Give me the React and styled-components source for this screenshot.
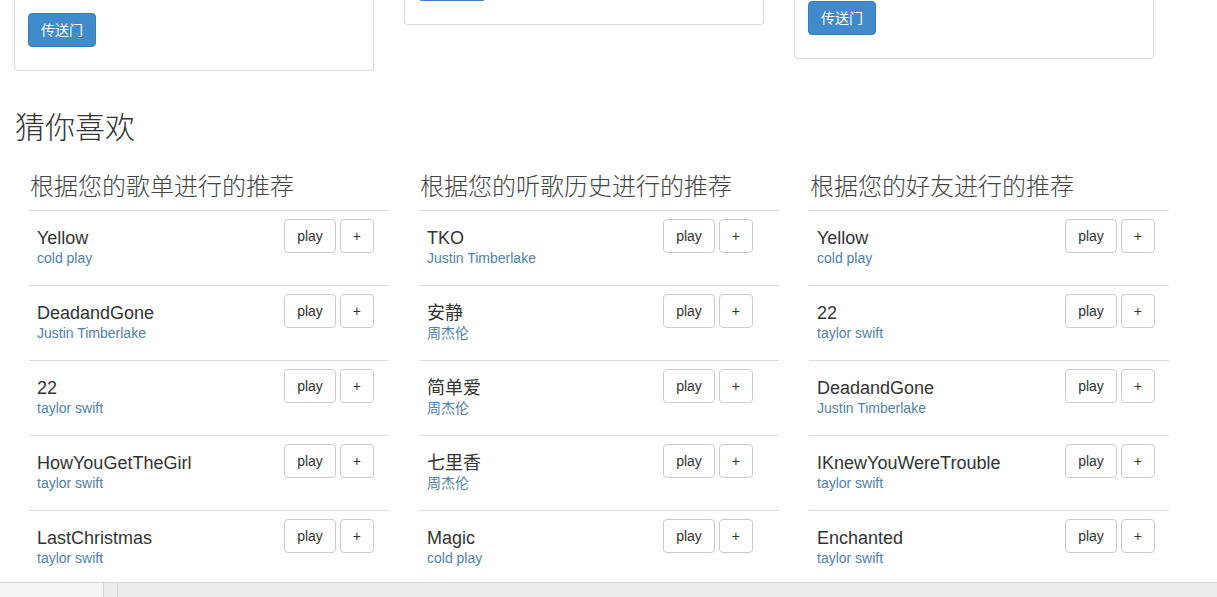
import React from "react";
import styled, { createGlobalStyle } from "styled-components";

const Global = createGlobalStyle`
  html, body { margin: 0; padding: 0; background: #fff; }
  body {
    font-family: "Liberation Sans", "Noto Sans CJK SC", sans-serif;
    font-size: 14px;
    line-height: 1.42857;
    color: #333;
  }
  * { box-sizing: border-box; }
`;

const Screen = styled.div`
  height: 597px;
  display: flex;
  flex-direction: column;
  overflow: hidden;
`;

const Main = styled.main`
  flex: 1;
  overflow: hidden;
  padding-left: 14px;
`;

const CardRow = styled.div`
  display: flex;
  align-items: flex-start;
  gap: 30px;
`;

const Card = styled.div`
  width: 360px;
  display: flex;
  flex-direction: column;
  align-items: flex-start;
  padding: 0 13px 23px;
  border: 1px solid #dcdcdc;
  border-top: 0;
  border-radius: 0 0 4px 4px;
  background: #fff;
`;

const PortalButton = styled.button`
  margin-top: ${(p) => p.$offset}px;
  height: 34px;
  padding: 6px 12px;
  font-family: "Liberation Sans", "Noto Sans CJK SC", sans-serif;
  font-size: 14px;
  line-height: 20px;
  color: #fff;
  background: #428bca;
  border: 1px solid #357ebd;
  border-radius: 4px;
`;

const SectionTitle = styled.h2`
  margin: 40px 0 10px 1px;
  font-family: "Liberation Sans", "Noto Sans CJK SC", sans-serif;
  font-size: 30px;
  font-weight: 300;
  line-height: 33px;
  color: #333;
`;

const Columns = styled.div`
  display: flex;
  gap: 30px;
  padding-left: 15px;
`;

const Column = styled.section`
  width: 360px;
`;

const ColumnTitle = styled.h3`
  margin: 20px 0 10px 1px;
  font-family: "Liberation Sans", "Noto Sans CJK SC", sans-serif;
  font-size: 24px;
  font-weight: 300;
  line-height: 26px;
  color: #444;
  white-space: nowrap;
`;

const Row = styled.div`
  display: flex;
  align-items: flex-start;
  justify-content: space-between;
  border-top: 1px solid #dddddd;
  padding: 8px ${(p) => p.$tail}px 8px 8px;
`;

const Info = styled.div`
  padding: 9px 0;
`;

const SongName = styled.div`
  font-size: 18px;
  line-height: 20px;
  color: #333;
`;

const Artist = styled.div`
  font-size: 14px;
  line-height: 20px;
  color: #5082aa;
`;

const Actions = styled.div`
  display: flex;
  gap: 4px;
`;

const ActionButton = styled.button`
  height: 34px;
  padding: 6px 12px;
  font-family: "Liberation Sans", sans-serif;
  font-size: 14px;
  line-height: 20px;
  color: #333;
  background: #fff;
  border: 1px solid #cccccc;
  border-radius: 4px;
`;

const StatusBar = styled.footer`
  height: 15px;
  flex-shrink: 0;
  display: flex;
  background: #ececec;
  border-top: 1px solid #d6d6d6;
`;

const StatusTab = styled.div`
  width: ${(p) => p.$w}px;
  background: ${(p) => p.$bg};
  border-right: 1px solid #d0d0d0;
`;

const cards = [13, -33, 1];

const sections = [
  {
    title: "根据您的歌单进行的推荐",
    tail: 15,
    songs: [
      ["Yellow", "cold play"],
      ["DeadandGone", "Justin Timberlake"],
      ["22", "taylor swift"],
      ["HowYouGetTheGirl", "taylor swift"],
      ["LastChristmas", "taylor swift"],
    ],
  },
  {
    title: "根据您的听歌历史进行的推荐",
    tail: 26,
    songs: [
      ["TKO", "Justin Timberlake"],
      ["安静", "周杰伦"],
      ["简单爱", "周杰伦"],
      ["七里香", "周杰伦"],
      ["Magic", "cold play"],
    ],
  },
  {
    title: "根据您的好友进行的推荐",
    tail: 14,
    songs: [
      ["Yellow", "cold play"],
      ["22", "taylor swift"],
      ["DeadandGone", "Justin Timberlake"],
      ["IKnewYouWereTrouble", "taylor swift"],
      ["Enchanted", "taylor swift"],
    ],
  },
];

export default function App() {
  return (
    <Screen>
      <Global />
      <Main>
        <CardRow>
          {cards.map((o, i) => (
            <Card key={i}>
              <PortalButton $offset={o}>传送门</PortalButton>
            </Card>
          ))}
        </CardRow>
        <SectionTitle>猜你喜欢</SectionTitle>
        <Columns>
          {sections.map((s) => (
            <Column key={s.title}>
              <ColumnTitle>{s.title}</ColumnTitle>
              {s.songs.map(([name, artist], i) => (
                <Row key={i} $tail={s.tail}>
                  <Info>
                    <SongName>{name}</SongName>
                    <Artist>{artist}</Artist>
                  </Info>
                  <Actions>
                    <ActionButton>play</ActionButton>
                    <ActionButton>+</ActionButton>
                  </Actions>
                </Row>
              ))}
            </Column>
          ))}
        </Columns>
      </Main>
      <StatusBar>
        <StatusTab $w={104} $bg="#f4f4f4" />
        <StatusTab $w={14} $bg="#ececec" />
      </StatusBar>
    </Screen>
  );
}
